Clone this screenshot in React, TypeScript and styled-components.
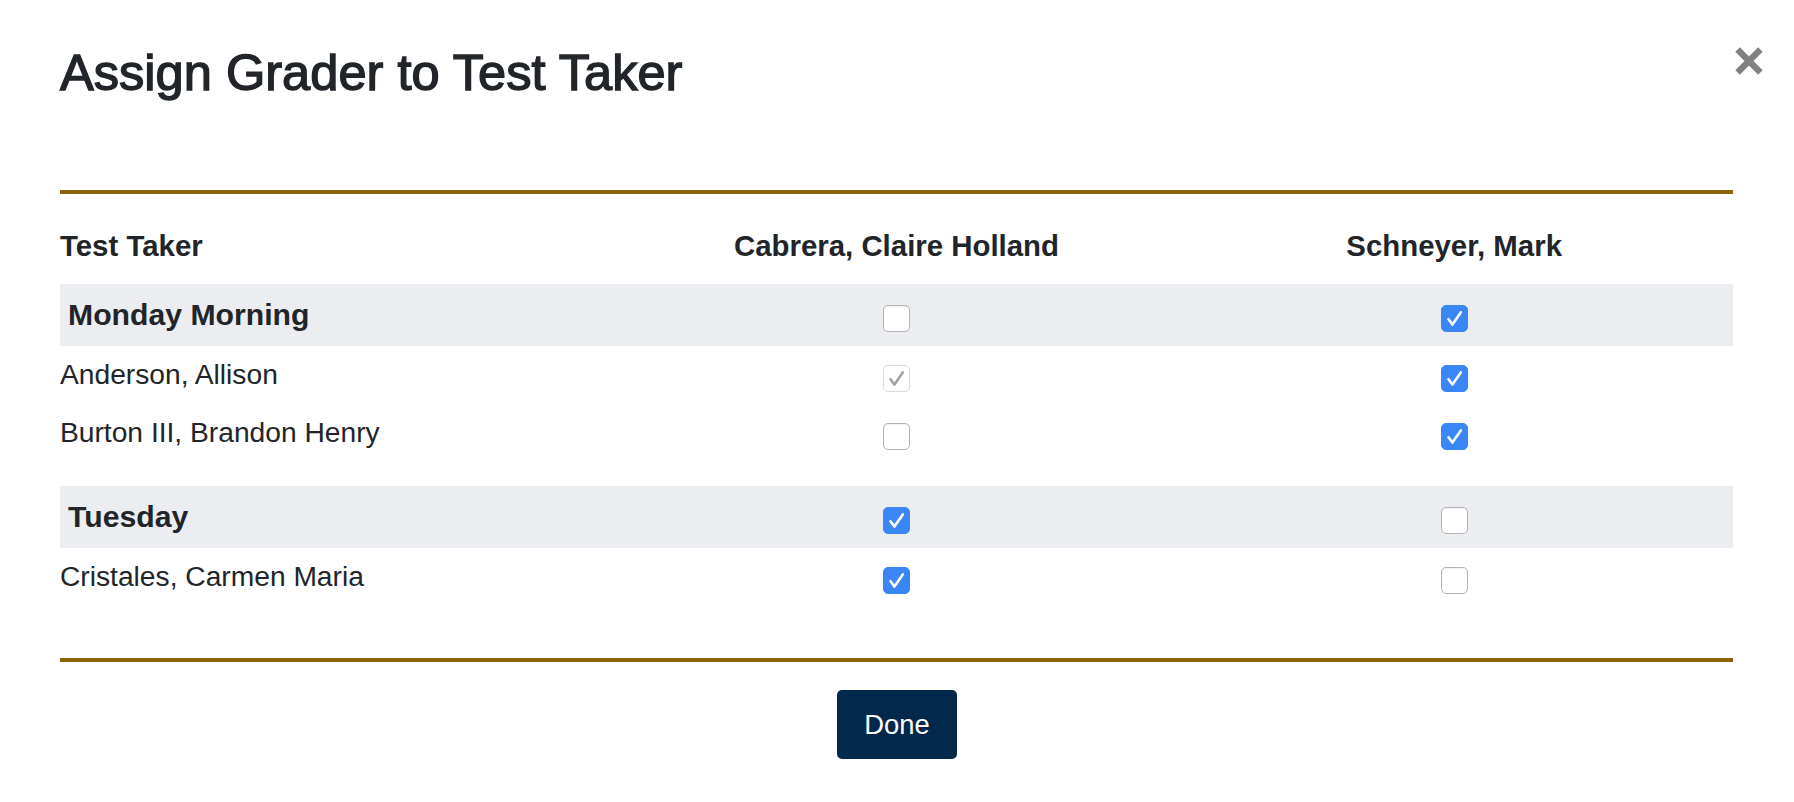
import React, { useState } from 'react'
import styled, { createGlobalStyle } from 'styled-components'

const GlobalStyle = createGlobalStyle`
    body {
        margin: 0;
        background: #fff;
        color: #212529;
        font-family: "Liberation Sans", Arial, Helvetica, sans-serif;
    }
`

const Modal = styled.div`
    width: 100%;
    min-height: 802px;
    background: #fff;
`

const Header = styled.div`
    display: flex;
    justify-content: space-between;
    align-items: flex-start;
    padding: 43px 31px 87px 60px;
`

const Title = styled.h1`
    margin: 0;
    font-size: 50.6px;
    line-height: 60px;
    font-weight: 400;
    -webkit-text-stroke: 1.4px #212529;
`

const CloseButton = styled.button`
    margin-top: 4px;
    padding: 0;
    border: 0;
    background: none;
    width: 28px;
    height: 28px;
    cursor: pointer;
    display: flex;
`

const Body = styled.div`
    margin: 0 61px 0 60px;
    border-top: 4px solid #8b640b;
    border-bottom: 4px solid #8b640b;
    padding-bottom: 52px;
`

const HeadRow = styled.div`
    display: grid;
    grid-template-columns: repeat(3, 1fr);
    padding: 30px 0 16px;
`

const HeadCell = styled.div<{ $center?: boolean }>`
    font-size: 29.4px;
    line-height: 1.5;
    font-weight: 700;
    text-align: ${p => (p.$center ? 'center' : 'left')};
`

const Groups = styled.div`
    display: flex;
    flex-direction: column;
    gap: 24px;
`

const Row = styled.div<{ $group?: boolean }>`
    display: grid;
    grid-template-columns: repeat(3, 1fr);
    align-items: center;
    height: ${p => (p.$group ? '62px' : '58px')};
    background: ${p => (p.$group ? '#ebedf0' : 'transparent')};
`

const Label = styled.div<{ $group?: boolean }>`
    font-size: ${p => (p.$group ? '30.2px' : '28.2px')};
    font-weight: ${p => (p.$group ? 700 : 400)};
    padding-left: ${p => (p.$group ? '8px' : '0')};
    line-height: 1.2;
`

const CheckCell = styled.div`
    display: flex;
    justify-content: center;
    padding-top: 6px;
`

const Box = styled.span<{ $checked: boolean; $disabled?: boolean }>`
    box-sizing: border-box;
    width: 27px;
    height: 27px;
    border-radius: 5px;
    display: flex;
    align-items: center;
    justify-content: center;
    cursor: ${p => (p.$disabled ? 'default' : 'pointer')};
    background: ${p => (p.$checked && !p.$disabled ? '#3b86f7' : '#fff')};
    border: 1px solid
        ${p => (p.$disabled ? '#d9d9d9' : p.$checked ? '#3b86f7' : '#b3b3b3')};
    box-shadow: ${p => (p.$checked || p.$disabled ? 'none' : 'inset 0 1px 1px rgba(0,0,0,0.06)')};
`

const Footer = styled.div`
    display: flex;
    justify-content: center;
    padding-top: 28px;
`

const DoneButton = styled.button`
    height: 69px;
    padding: 0 27px;
    border: 0;
    border-radius: 5px;
    background: #02284b;
    color: #fff;
    font-family: inherit;
    font-size: 27.4px;
    cursor: pointer;
`

type Cell = { checked: boolean; disabled?: boolean }
type Person = { name: string; cells: Cell[] }
type Group = { name: string; cells: Cell[]; people: Person[] }

const graders = ['Cabrera, Claire Holland', 'Schneyer, Mark']

const initialGroups: Group[] = [
    {
        name: 'Monday Morning',
        cells: [{ checked: false }, { checked: true }],
        people: [
            { name: 'Anderson, Allison', cells: [{ checked: true, disabled: true }, { checked: true }] },
            { name: 'Burton III, Brandon Henry', cells: [{ checked: false }, { checked: true }] },
        ],
    },
    {
        name: 'Tuesday',
        cells: [{ checked: true }, { checked: false }],
        people: [
            { name: 'Cristales, Carmen Maria', cells: [{ checked: true }, { checked: false }] },
        ],
    },
]

const CheckBox: React.FunctionComponent<{ cell: Cell; onToggle: () => void }> = ({ cell, onToggle }) => (
    <Box
        role="checkbox"
        aria-checked={cell.checked}
        aria-disabled={cell.disabled}
        $checked={cell.checked}
        $disabled={cell.disabled}
        onClick={() => !cell.disabled && onToggle()}
    >
        {cell.checked && (
            <svg width="27" height="27" viewBox="0 0 27 27" style={{ flex: 'none' }}>
                <path
                    d="M7.5 14.2 L11.4 19.6 L19.8 7.4"
                    fill="none"
                    stroke={cell.disabled ? '#a3a3a3' : '#fff'}
                    strokeWidth="2.6"
                    strokeLinecap="round"
                    strokeLinejoin="round"
                />
            </svg>
        )}
    </Box>
)

const App: React.FunctionComponent = () => {
    const [groups, setGroups] = useState(initialGroups)

    const toggle = (g: number, p: number | null, c: number) => {
        setGroups(prev =>
            prev.map((group, gi) => {
                if (gi !== g) return group
                if (p === null) {
                    return {
                        ...group,
                        cells: group.cells.map((cell, ci) => (ci === c ? { ...cell, checked: !cell.checked } : cell)),
                    }
                }
                return {
                    ...group,
                    people: group.people.map((person, pi) =>
                        pi !== p
                            ? person
                            : {
                                  ...person,
                                  cells: person.cells.map((cell, ci) =>
                                      ci === c ? { ...cell, checked: !cell.checked } : cell
                                  ),
                              }
                    ),
                }
            })
        )
    }

    return (
        <Modal>
            <GlobalStyle />
            <Header>
                <Title>Assign Grader to Test Taker</Title>
                <CloseButton aria-label="Close">
                    <svg width="28" height="28" viewBox="0 0 28 28">
                        <path d="M2.6 2.6 L25.4 25.4 M25.4 2.6 L2.6 25.4" stroke="#808080" strokeWidth="6.4" />
                    </svg>
                </CloseButton>
            </Header>

            <Body>
                <HeadRow>
                    <HeadCell>Test Taker</HeadCell>
                    {graders.map(g => (
                        <HeadCell key={g} $center>
                            {g}
                        </HeadCell>
                    ))}
                </HeadRow>

                <Groups>
                    {groups.map((group, gi) => (
                        <div key={group.name}>
                            <Row $group>
                                <Label $group>{group.name}</Label>
                                {group.cells.map((cell, ci) => (
                                    <CheckCell key={ci}>
                                        <CheckBox cell={cell} onToggle={() => toggle(gi, null, ci)} />
                                    </CheckCell>
                                ))}
                            </Row>
                            {group.people.map((person, pi) => (
                                <Row key={person.name}>
                                    <Label>{person.name}</Label>
                                    {person.cells.map((cell, ci) => (
                                        <CheckCell key={ci}>
                                            <CheckBox cell={cell} onToggle={() => toggle(gi, pi, ci)} />
                                        </CheckCell>
                                    ))}
                                </Row>
                            ))}
                        </div>
                    ))}
                </Groups>
            </Body>

            <Footer>
                <DoneButton>Done</DoneButton>
            </Footer>
        </Modal>
    )
}

export default App
